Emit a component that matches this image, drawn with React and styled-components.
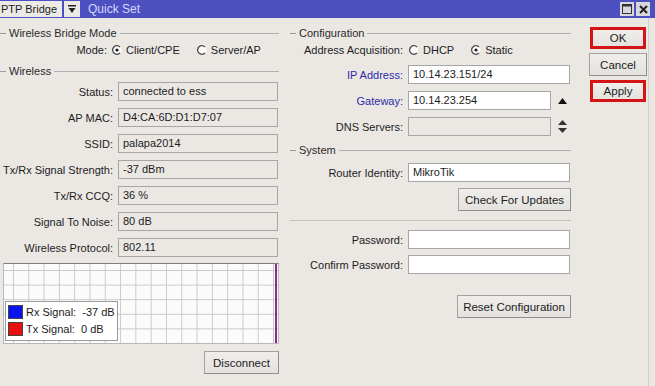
import styled, { createGlobalStyle } from 'styled-components'

const GlobalStyle = createGlobalStyle`
    html, body {
        margin: 0;
        padding: 0;
        background: #ebe8e4;
    }
    body {
        font-family: 'Liberation Sans', Arial, sans-serif;
        font-size: 11px;
        color: #1c1c1c;
    }
`

const Window = styled.div`
    width: 655px;
    height: 386px;
    background: #ebe8e4;
    overflow: hidden;
    position: relative;
`
const TitleBar = styled.div`
    height: 18px;
    background: #4c50c0;
    display: flex;
    align-items: center;
`
const ModeSelect = styled.div`
    width: 62px;
    height: 16px;
    background: #eceae6;
    line-height: 16px;
    padding-left: 1px;
    box-sizing: border-box;
`
const DropButton = styled.div`
    width: 16px;
    height: 16px;
    margin-left: 2px;
    background: #eceae6;
    display: flex;
    align-items: center;
    justify-content: center;
`
const TitleText = styled.span`
    margin-left: 8px;
    color: #d6d9ff;
    font-size: 12px;
`
const WinControls = styled.div`
    margin-left: auto;
    margin-right: 5px;
    display: flex;
    gap: 2px;
`
const WinButton = styled.div`
    width: 14px;
    height: 14px;
    background: #d8d8dc;
    display: flex;
    align-items: center;
    justify-content: center;
`
const Content = styled.div`
    display: flex;
    align-items: flex-start;
`
const Panel = styled.div`
    width: ${p => p.width}px;
    margin-left: ${p => p.offset || 0}px;
    display: flex;
    flex-direction: column;
`
const SectionHeader = styled.div`
    height: 14px;
    margin-top: ${p => p.top}px;
    display: flex;
    align-items: center;
    gap: 3px;
    color: #2a2a2a;
    &::before {
        content: '';
        width: 6px;
        height: 1px;
        background: #9e9e9e;
    }
    &::after {
        content: '';
        flex: 1;
        height: 1px;
        background: #b0b0b0;
    }
`
const Row = styled.div`
    display: grid;
    grid-template-columns: ${p => p.labelWidth || 113}px auto;
    column-gap: ${p => p.gap || 5}px;
    align-items: center;
    height: ${p => p.height || 19}px;
    margin-top: ${p => p.top}px;
`
const Label = styled.span`
    text-align: right;
    white-space: nowrap;
    color: ${p => (p.blue ? '#2b2ba6' : '#1c1c1c')};
`
const FieldLine = styled.div`
    display: flex;
    align-items: center;
    gap: 7px;
`
const Field = styled.div`
    width: ${p => p.width}px;
    height: 19px;
    box-sizing: border-box;
    border: 1px solid #a6a6a6;
    background: ${p => (p.disabled ? '#ebe8e4' : '#ffffff')};
    padding-left: 4px;
    line-height: 17px;
    white-space: nowrap;
    overflow: hidden;
`
const RadioGroup = styled.div`
    display: flex;
    align-items: center;
    gap: 17px;
`
const RadioItem = styled.label`
    display: flex;
    align-items: center;
    gap: 4px;
`
const Chart = styled.div`
    position: relative;
    margin: 6px 0 0 3px;
    width: 276px;
    height: 81px;
    box-sizing: border-box;
    border: 1px solid #b8b8b8;
    border-top-color: #7e7e7e;
    background-color: #fbfbfb;
    background-image:
        linear-gradient(to right, #c9c9c9 1px, transparent 1px),
        linear-gradient(to bottom, #c9c9c9 1px, transparent 1px);
    background-size: 15.3px 14.6px;
    background-position: 9px 6px;
`
const ChartCursor = styled.div`
    position: absolute;
    top: 0;
    bottom: 0;
    right: 1px;
    width: 2px;
    background: #8a2b8c;
`
const Legend = styled.div`
    position: absolute;
    left: 1px;
    top: 37px;
    width: 113px;
    height: 40px;
    box-sizing: border-box;
    border: 1px solid #9a9a9a;
    background: #ffffff;
    padding: 2px 0 0 2px;
    display: flex;
    flex-direction: column;
    gap: 2px;
`
const LegendItem = styled.div`
    display: flex;
    align-items: center;
    gap: 3px;
    height: 15px;
    white-space: pre;
`
const Swatch = styled.span`
    width: 15px;
    height: 14px;
    box-sizing: border-box;
    border: 1px solid #444;
    background: ${p => p.color};
`
const ButtonRow = styled.div`
    display: flex;
    justify-content: flex-end;
    margin-top: ${p => p.top}px;
    padding-right: ${p => p.right || 0}px;
`
const Button = styled.div`
    width: ${p => p.width}px;
    height: ${p => p.height || 23}px;
    box-sizing: border-box;
    border: 1px solid #a3a3a3;
    border-right-color: #8e8e8e;
    border-bottom-color: #8e8e8e;
    background: linear-gradient(#f0eeeb, #e4e2de);
    display: flex;
    align-items: center;
    justify-content: center;
    font-size: 11.5px;
`
const Separator = styled.div`
    height: 1px;
    background: #c4c2be;
    margin-top: 9px;
`
const ActionColumn = styled.div`
    margin-left: 18px;
    padding-top: 9px;
    width: 58px;
    display: flex;
    flex-direction: column;
    align-items: center;
    gap: 4px;
`
const ActionButton = styled(Button)`
    ${p => p.marked && `
        border: 3px solid #d41414;
        width: 56px;
        height: 22px;
    `}
`
const WindowEdge = styled.div`
    position: absolute;
    top: 18px;
    bottom: 0;
    left: 648px;
    width: 1px;
    background: #d2d0cc;
`

function Radio({ checked }) {
    return (
        <svg width="10" height="10" viewBox="0 0 10 10">
            <circle cx="5" cy="5" r="4.3" fill="#fff" />
            <path d="M8 2 A4.3 4.3 0 1 0 8 8" fill="none" stroke="#4a4a4a" strokeWidth="1.3" />
            {checked && <circle cx="5" cy="5" r="1.6" fill="#1a1a1a" />}
        </svg>
    )
}

function Radios({ options, value }) {
    return (
        <RadioGroup>
            {options.map(o => (
                <RadioItem key={o}>
                    <Radio checked={o === value} />
                    {o}
                </RadioItem>
            ))}
        </RadioGroup>
    )
}

const wirelessRows = [
    ['Status:', 'connected to ess'],
    ['AP MAC:', 'D4:CA:6D:D1:D7:07'],
    ['SSID:', 'palapa2014'],
    ['Tx/Rx Signal Strength:', '-37 dBm'],
    ['Tx/Rx CCQ:', '36 %'],
    ['Signal To Noise:', '80 dB'],
    ['Wireless Protocol:', '802.11'],
]

function UpArrow() {
    return (
        <svg width="9" height="6" viewBox="0 0 9 6">
            <path d="M0 6 L4.5 0 L9 6 Z" fill="#111" />
        </svg>
    )
}

function UpDownArrow() {
    return (
        <svg width="9" height="13" viewBox="0 0 9 13">
            <path d="M0 5 L4.5 0 L9 5 Z" fill="#333" />
            <path d="M0 8 L4.5 13 L9 8 Z" fill="#333" />
        </svg>
    )
}

export default function App() {
    return (
        <Window>
            <GlobalStyle />
            <TitleBar>
                <ModeSelect>PTP Bridge</ModeSelect>
                <DropButton>
                    <svg width="8" height="9" viewBox="0 0 8 9">
                        <rect x="0" y="0" width="8" height="1.5" fill="#222" />
                        <path d="M0.5 3 L7.5 3 L4 8 Z" fill="#222" />
                    </svg>
                </DropButton>
                <TitleText>Quick Set</TitleText>
                <WinControls>
                    <WinButton>
                        <svg width="10" height="10" viewBox="0 0 10 10">
                            <rect x="0.5" y="0.5" width="9" height="9" fill="none" stroke="#333" />
                            <rect x="0.5" y="0.5" width="9" height="2" fill="#333" />
                        </svg>
                    </WinButton>
                    <WinButton>
                        <svg width="9" height="9" viewBox="0 0 9 9">
                            <path d="M1 1 L8 8 M8 1 L1 8" stroke="#222" strokeWidth="2" />
                        </svg>
                    </WinButton>
                </WinControls>
            </TitleBar>

            <Content>
                <Panel width={279}>
                    <SectionHeader top={8}>Wireless Bridge Mode</SectionHeader>
                    <Row labelWidth={107} top={1} height={18}>
                        <Label>Mode:</Label>
                        <Radios options={['Client/CPE', 'Server/AP']} value="Client/CPE" />
                    </Row>
                    <SectionHeader top={5}>Wireless</SectionHeader>
                    {wirelessRows.map(([label, value], i) => (
                        <Row key={label} top={i === 0 ? 4 : 7}>
                            <Label>{label}</Label>
                            <Field width={160} disabled>{value}</Field>
                        </Row>
                    ))}
                    <Chart>
                        <ChartCursor />
                        <Legend>
                            <LegendItem>
                                <Swatch color="#0a14f0" />
                                Rx Signal:  -37 dB
                            </LegendItem>
                            <LegendItem>
                                <Swatch color="#e81010" />
                                Tx Signal:  0 dB
                            </LegendItem>
                        </Legend>
                    </Chart>
                    <ButtonRow top={7}>
                        <Button width={75}>Disconnect</Button>
                    </ButtonRow>
                </Panel>

                <Panel width={281} offset={11}>
                    <SectionHeader top={8}>Configuration</SectionHeader>
                    <Row labelWidth={113} gap={6} top={1} height={18}>
                        <Label>Address Acquisition:</Label>
                        <Radios options={['DHCP', 'Static']} value="Static" />
                    </Row>
                    <Row top={6}>
                        <Label blue>IP Address:</Label>
                        <Field width={162}>10.14.23.151/24</Field>
                    </Row>
                    <Row top={7}>
                        <Label blue>Gateway:</Label>
                        <FieldLine>
                            <Field width={143}>10.14.23.254</Field>
                            <UpArrow />
                        </FieldLine>
                    </Row>
                    <Row top={7}>
                        <Label>DNS Servers:</Label>
                        <FieldLine>
                            <Field width={143} disabled />
                            <UpDownArrow />
                        </FieldLine>
                    </Row>
                    <SectionHeader top={7}>System</SectionHeader>
                    <Row top={6}>
                        <Label>Router Identity:</Label>
                        <Field width={162}>MikroTik</Field>
                    </Row>
                    <ButtonRow top={6}>
                        <Button width={113}>Check For Updates</Button>
                    </ButtonRow>
                    <Separator />
                    <Row top={9}>
                        <Label>Password:</Label>
                        <Field width={162} />
                    </Row>
                    <Row top={6}>
                        <Label>Confirm Password:</Label>
                        <Field width={162} />
                    </Row>
                    <ButtonRow top={21}>
                        <Button width={114}>Reset Configuration</Button>
                    </ButtonRow>
                </Panel>

                <ActionColumn>
                    <ActionButton marked>OK</ActionButton>
                    <ActionButton width={58}>Cancel</ActionButton>
                    <ActionButton marked>Apply</ActionButton>
                </ActionColumn>
            </Content>
            <WindowEdge />
        </Window>
    )
}
